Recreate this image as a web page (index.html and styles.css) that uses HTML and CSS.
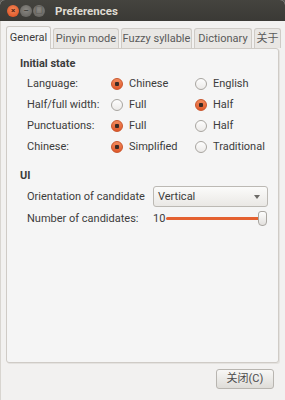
FILE: index.html
```html
<!DOCTYPE html>
<html>
  <head>
    <meta charset="utf-8">
    <title>Preferences</title>
    <link rel="stylesheet" href="styles.css">
  </head>
  <body>
    <div class="window">
      <div class="titlebar">
        <span class="wbtn close">&#215;</span>
        <span class="wbtn">&#8211;</span>
        <span class="wbtn">&#9633;</span>
        <span class="title">Preferences</span>
      </div>
      <div class="body">
        <div class="tabs">
          <span class="tab active">General</span>
          <span class="tab">Pinyin mode</span>
          <span class="tab">Fuzzy syllable</span>
          <span class="tab">Dictionary</span>
          <span class="tab">关于</span>
        </div>
        <div class="panel">
          <div class="section">Initial state</div>
          <div class="options">
            <span class="label">Language:</span>
            <span class="radio on">Chinese</span>
            <span class="radio">English</span>

            <span class="label">Half/full width:</span>
            <span class="radio">Full</span>
            <span class="radio on">Half</span>

            <span class="label">Punctuations:</span>
            <span class="radio on">Full</span>
            <span class="radio">Half</span>

            <span class="label">Chinese:</span>
            <span class="radio on">Simplified</span>
            <span class="radio">Traditional</span>
          </div>
          <div class="section ui">UI</div>
          <div class="ui-rows">
            <span class="label">Orientation of candidate</span>
            <span class="combo">Vertical<span class="arrow"></span></span>
            <span class="label">Number of candidates:</span>
            <span class="scale">
              <span class="value">10</span>
              <span class="track"><span class="thumb"></span></span>
            </span>
          </div>
        </div>
        <div class="actions">
          <span class="button">关闭(C)</span>
        </div>
      </div>
    </div>
  </body>
</html>
```

FILE: styles.css
```css
html, body { margin: 0; padding: 0; }
body {
  width: 285px; height: 400px; overflow: hidden;
  background: #5c5b57;
  font-family: Roboto, "Noto Sans CJK SC", sans-serif;
  font-size: 11px; color: #3c3c3c;
  white-space: nowrap;
}
.window {
  height: 400px; display: flex; flex-direction: column;
  background: #f2f1f0;
  border-radius: 5px 5px 0 0;
  overflow: hidden;
}
.titlebar {
  height: 21px; flex: none;
  display: flex; align-items: center;
  padding-left: 7px;
  background: linear-gradient(#45443f, #3a3935);
  color: #dfdbd2;
}
.wbtn {
  width: 12px; height: 12px; border-radius: 50%;
  margin-right: 1px;
  background: radial-gradient(circle at 50% 40%, #8a8883, #5e5c58);
  color: #3c3b37; font-size: 8px; line-height: 12px; text-align: center;
  font-weight: bold;
}
.wbtn.close {
  background: radial-gradient(circle at 50% 40%, #f58a5a, #d9481a);
  color: #4a2010;
}
.title { margin-left: 9px; font-weight: bold; font-size: 11.5px; }

.body {
  flex: 1; display: flex; flex-direction: column;
  padding: 4px 6px 0 5px;
  border-left: 1px solid #d8d5d0;
}
.tabs {
  display: grid;
  grid-template-columns: 45px 66px 71px 58px 27px;
  gap: 2px; align-items: end; height: 23px;
}
.tab {
  height: 19px; line-height: 19px; text-align: center;
  border: 1px solid #cfcbc6; border-bottom: none;
  border-radius: 3px 3px 0 0;
  background: #e9e7e4; color: #5a5a5a;
  overflow: hidden;
}
.tab.active {
  height: 22px; line-height: 22px;
  background: #f5f5f5; color: #3c3c3c;
  position: relative; top: 1px;
}
.panel {
  box-sizing: border-box; height: 315px;
  background: #f5f5f5;
  border: 1px solid #cfcbc6;
  border-radius: 0 3px 3px 3px;
  box-shadow: 1px 1px 0 #e4e2df;
  padding: 8px 0 0 13px;
}
.section { font-weight: bold; height: 16px; }
.section.ui { margin-top: 12px; }
.options {
  display: grid;
  grid-template-columns: 84px 84px auto;
  grid-auto-rows: 21px;
  align-items: center;
  padding-left: 7px;
}
.radio { display: flex; align-items: center; }
.radio::before {
  content: ""; width: 10px; height: 10px; margin-right: 6px;
  border: 1px solid #a8a5a0; border-radius: 50%;
  background: linear-gradient(#fdfdfd, #eceae8);
}
.radio.on::before {
  border-color: #c9542a;
  background: radial-gradient(circle, #3a2a24 0 2px, transparent 2.5px),
              linear-gradient(#f28a5c, #e0592b);
}
.ui-rows {
  display: grid;
  grid-template-columns: 126px auto;
  grid-template-rows: 24px 21px;
  align-items: center;
  padding-left: 7px;
  margin-top: -1px;
}
.combo {
  height: 19px; line-height: 19px;
  padding-left: 4px; width: 109px;
  border: 1px solid #bcb9b4; border-radius: 3px;
  background: linear-gradient(#fbfbfa, #eae8e5);
  position: relative;
}
.arrow {
  position: absolute; right: 7px; top: 8px;
  border: 3px solid transparent; border-top: 4px solid #6c6a66;
  border-bottom: none;
}
.scale { display: flex; align-items: center; }
.value { width: 13px; }
.track {
  width: 96px; height: 3px;
  background: #e46131; border-radius: 2px; position: relative;
}
.thumb {
  position: absolute; right: -5px; top: -6px;
  width: 7px; height: 13px;
  border: 1px solid #a9a6a1; border-radius: 3px 3px 4px 4px;
  background: linear-gradient(#fdfdfd, #e2e0dd);
}
.actions { display: flex; justify-content: flex-end; padding: 6px 5px 0 0; }
.button {
  width: 56px; height: 18px; line-height: 18px; text-align: center;
  border: 1px solid #b8b5b0; border-radius: 3px;
  background: linear-gradient(#f8f7f6, #dedcd8);
  color: #4c4c4c;
}
```
